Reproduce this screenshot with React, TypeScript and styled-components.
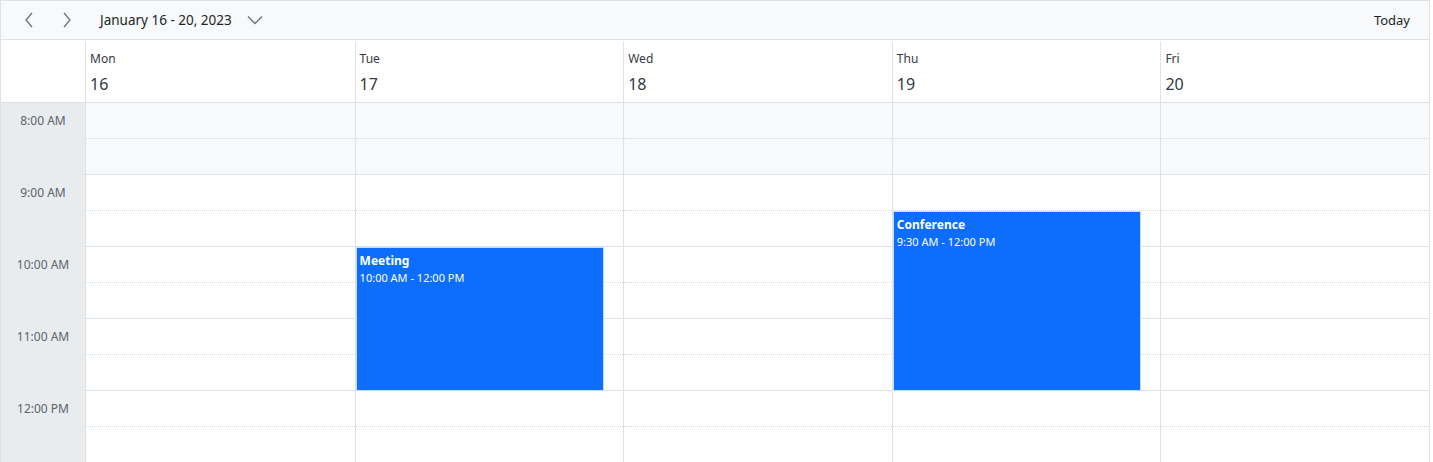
import styled, { createGlobalStyle } from 'styled-components';

const GlobalStyle = createGlobalStyle`
  html, body {
    margin: 0;
    padding: 0;
    background: #fff;
    font-family: "Segoe UI", "Noto Sans", "Open Sans", sans-serif;
  }
`;

const HOUR = 72;
const START_HOUR = 8;
const HOURS = [8, 9, 10, 11, 12];

const days = [
  { name: 'Mon', date: 16 },
  { name: 'Tue', date: 17 },
  { name: 'Wed', date: 18 },
  { name: 'Thu', date: 19 },
  { name: 'Fri', date: 20 },
];

type EventType = {
  day: number;
  title: string;
  time: string;
  start: number;
  end: number;
};

const events: EventType[] = [
  { day: 1, title: 'Meeting', time: '10:00 AM - 12:00 PM', start: 10, end: 12 },
  { day: 3, title: 'Conference', time: '9:30 AM - 12:00 PM', start: 9.5, end: 12 },
];

const Scheduler = styled.div`
  width: 1430px;
  box-sizing: border-box;
  border: 1px solid #dee2e6;
  border-bottom: none;
  height: 462px;
  overflow: hidden;
  color: #212529;
`;

const Toolbar = styled.div`
  height: 38px;
  display: flex;
  align-items: center;
  background: #f8f9fa;
  border-bottom: 1px solid #dee2e6;
  padding: 0 19px 0 16px;
`;

const NavButton = styled.button`
  width: 24px;
  height: 30px;
  border: none;
  background: none;
  padding: 0;
  display: flex;
  align-items: center;
  justify-content: center;
  color: #6c757d;
  margin-right: 14px;
  cursor: pointer;
`;

const DateRange = styled.div`
  display: flex;
  align-items: center;
  gap: 15px;
  font-size: 13.5px;
  color: #212529;
  margin-left: 7px;
  & > svg {
    color: #6c757d;
  }
`;

const TodayButton = styled.button`
  margin-left: auto;
  border: none;
  background: none;
  font-family: inherit;
  font-size: 13px;
  color: #212529;
  padding: 0;
  cursor: pointer;
`;

const Grid = styled.div`
  display: grid;
  grid-template-columns: 85px repeat(5, 1fr);
`;

const HeaderCorner = styled.div`
  height: 63px;
  box-sizing: border-box;
  border-bottom: 1px solid #dee2e6;
`;

const DayHeader = styled.div<{ $first?: boolean }>`
  height: 63px;
  box-sizing: border-box;
  border-bottom: 1px solid #dee2e6;
  position: relative;
  padding: 10px 0 0 ${(p) => (p.$first ? 4 : 5)}px;
  &::before {
    content: '';
    position: absolute;
    left: ${(p) => (p.$first ? -1 : 0)}px;
    top: 2px;
    bottom: 0;
    border-left: 1px solid #dee2e6;
  }
`;

const DayName = styled.div`
  font-size: 12px;
  line-height: 18px;
  color: #343a40;
`;

const DayNumber = styled.div`
  font-size: 16px;
  line-height: 24px;
  margin-top: 4px;
  color: #343a40;
`;

const TimeColumn = styled.div`
  background: #e9ecef;
  border-right: 1px solid #dee2e6;
`;

const TimeLabel = styled.div`
  height: ${HOUR}px;
  box-sizing: border-box;
  font-size: 12px;
  line-height: 36px;
  text-align: center;
  color: #5c636a;
`;

const DayColumn = styled.div<{ $first?: boolean }>`
  position: relative;
  border-left: ${(p) => (p.$first ? 'none' : '1px solid #dee2e6')};
`;

const Slot = styled.div<{ $half?: boolean; $off?: boolean }>`
  height: 36px;
  box-sizing: border-box;
  background: ${(p) => (p.$off ? '#f8f9fa' : '#fff')};
  border-bottom: 1px ${(p) => (p.$half ? 'dotted #d5d9dd' : 'solid #dee2e6')};
`;

const EventCard = styled.div`
  position: absolute;
  left: 0;
  right: 19px;
  box-sizing: border-box;
  background: #0d6efd;
  border: 1px solid #c9dcf7;
  color: #fff;
  padding: 4px 3px;
  overflow: hidden;
`;

const EventTitle = styled.div`
  font-size: 12px;
  font-weight: 700;
  line-height: 18px;
`;

const EventTime = styled.div`
  font-size: 11px;
  line-height: 16px;
`;

const ChevronLeft = () => (
  <svg width="10" height="16" viewBox="0 0 10 16" fill="none">
    <path d="M8 1L2 8l6 7" stroke="currentColor" strokeWidth="1.3" />
  </svg>
);

const ChevronRight = () => (
  <svg width="10" height="16" viewBox="0 0 10 16" fill="none">
    <path d="M2 1l6 7-6 7" stroke="currentColor" strokeWidth="1.3" />
  </svg>
);

const ChevronDown = () => (
  <svg width="16" height="10" viewBox="0 0 16 10" fill="none">
    <path d="M1 1.5l7 7 7-7" stroke="currentColor" strokeWidth="1.3" />
  </svg>
);

export default function App() {
  return (
    <>
      <GlobalStyle />
      <Scheduler>
        <Toolbar>
          <NavButton aria-label="Previous">
            <ChevronLeft />
          </NavButton>
          <NavButton aria-label="Next">
            <ChevronRight />
          </NavButton>
          <DateRange>
            January 16 - 20, 2023
            <ChevronDown />
          </DateRange>
          <TodayButton>Today</TodayButton>
        </Toolbar>
        <Grid>
          <HeaderCorner />
          {days.map((d, i) => (
            <DayHeader key={d.name} $first={i === 0}>
              <DayName>{d.name}</DayName>
              <DayNumber>{d.date}</DayNumber>
            </DayHeader>
          ))}
          <TimeColumn>
            {HOURS.map((h) => (
              <TimeLabel key={h}>
                {h > 12 ? h - 12 : h}:00 {h >= 12 ? 'PM' : 'AM'}
              </TimeLabel>
            ))}
          </TimeColumn>
          {days.map((d, i) => (
            <DayColumn key={d.name} $first={i === 0}>
              {HOURS.map((h) => (
                <div key={h}>
                  <Slot $half $off={h < 9} />
                  <Slot $off={h < 9} />
                </div>
              ))}
              {events
                .filter((e) => e.day === i)
                .map((e) => (
                  <EventCard
                    key={e.title}
                    style={{
                      top: (e.start - START_HOUR) * HOUR,
                      height: (e.end - e.start) * HOUR,
                    }}
                  >
                    <EventTitle>{e.title}</EventTitle>
                    <EventTime>{e.time}</EventTime>
                  </EventCard>
                ))}
            </DayColumn>
          ))}
        </Grid>
      </Scheduler>
    </>
  );
}
